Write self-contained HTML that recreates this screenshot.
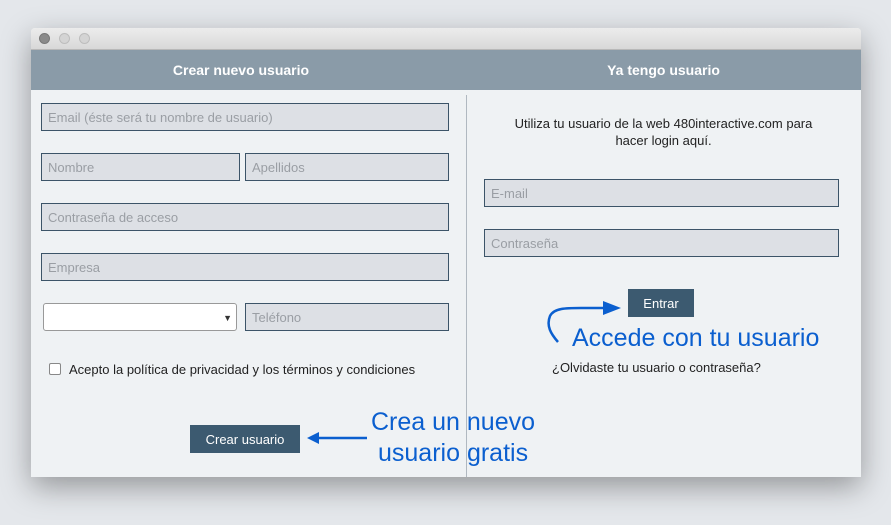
<!DOCTYPE html>
<html><head><meta charset="utf-8"><style>
body{margin:0;width:891px;height:525px;background:#e4e7eb;font-family:"Liberation Sans",sans-serif;position:relative;overflow:hidden}
.win{position:absolute;left:31px;top:28px;width:830px;height:449px;background:#eff2f4;box-shadow:0 10px 30px rgba(0,0,0,.35);border-radius:4px 4px 0 0;overflow:hidden}
.tb{position:absolute;left:0;top:0;width:830px;height:21px;background:linear-gradient(#ececec,#d8d8d8);border-bottom:1px solid #b8b8b8}
.dot{position:absolute;top:5px;width:11px;height:11px;border-radius:50%;background:#d4d4d4;border:1px solid #bdbdbd;box-sizing:border-box}
.hd{position:absolute;top:22px;left:0;width:830px;height:40px;background:#8a9ba8;color:#fff;font-size:14px;font-weight:bold}
.hd div{position:absolute;top:12px;text-align:center}
.in{position:absolute;box-sizing:border-box;height:28px;border:1px solid #3c5468;background:#dde0e5;color:#9a9ea4;font-size:13px;padding:7px 6px 5px;line-height:14px}
.btn{position:absolute;background:#3c5a70;color:#fff;font-size:13px;text-align:center;line-height:30px;height:28px}
.t{position:absolute;font-size:13px;color:#222}
.bl{position:absolute;color:#0b5fcf;font-size:25px;line-height:28px}
</style></head><body>
<div class="win">
<div class="tb"><div class="dot" style="left:8px;background:#8a8a8a;border-color:#777"></div><div class="dot" style="left:28px"></div><div class="dot" style="left:48px"></div></div>
<div class="hd"><div style="left:0;width:420px">Crear nuevo usuario</div><div style="left:435px;width:395px">Ya tengo usuario</div></div>
<div style="position:absolute;left:435px;top:67px;width:1px;height:382px;background:#b0b8c0"></div>
<div class="in" style="left:10px;top:75px;width:408px">Email (éste será tu nombre de usuario)</div>
<div class="in" style="left:10px;top:125px;width:199px">Nombre</div>
<div class="in" style="left:214px;top:125px;width:204px">Apellidos</div>
<div class="in" style="left:10px;top:175px;width:408px">Contraseña de acceso</div>
<div class="in" style="left:10px;top:225px;width:408px">Empresa</div>
<div class="in" style="left:12px;top:275px;width:194px;background:#fff;border-color:#999;border-radius:3px"><span style="position:absolute;right:4px;top:7px;color:#333;font-size:9px">▼</span></div>
<div class="in" style="left:214px;top:275px;width:204px">Teléfono</div>
<div style="position:absolute;left:18px;top:335px;width:12px;height:12px;border:1px solid #888;border-radius:2px;background:#fff;box-sizing:border-box"></div>
<div class="t" style="left:38px;top:334px">Acepto la política de privacidad y los términos y condiciones</div>
<div class="btn" style="left:159px;top:397px;width:110px">Crear usuario</div>
<svg style="position:absolute;left:274px;top:402px" width="64" height="16"><path d="M62 8H8" stroke="#0b5fcf" stroke-width="2.5"/><path d="M2 8L14 2V14Z" fill="#0b5fcf"/></svg>
<div class="bl" style="left:340px;top:380px">Crea un nuevo</div>
<div class="bl" style="left:347px;top:411px">usuario gratis</div>
<div class="t" style="left:435px;width:395px;text-align:center;top:87px;line-height:17px">Utiliza tu usuario de la web 480interactive.com para<br>hacer login aquí.</div>
<div class="in" style="left:453px;top:151px;width:355px">E-mail</div>
<div class="in" style="left:453px;top:201px;width:355px">Contraseña</div>
<div class="btn" style="left:597px;top:261px;width:66px">Entrar</div>
<svg style="position:absolute;left:510px;top:268px" width="85" height="50"><path d="M17 46C10 38 5 30 9 20C13 12 25 12 40 12H64" stroke="#0b5fcf" stroke-width="2.5" fill="none"/><path d="M80 12L62 5V19Z" fill="#0b5fcf"/></svg>
<div class="bl" style="left:541px;top:296px">Accede con tu usuario</div>
<div class="t" style="left:521px;top:332px">¿Olvidaste tu usuario o contraseña?</div>
</div>
</body></html>
